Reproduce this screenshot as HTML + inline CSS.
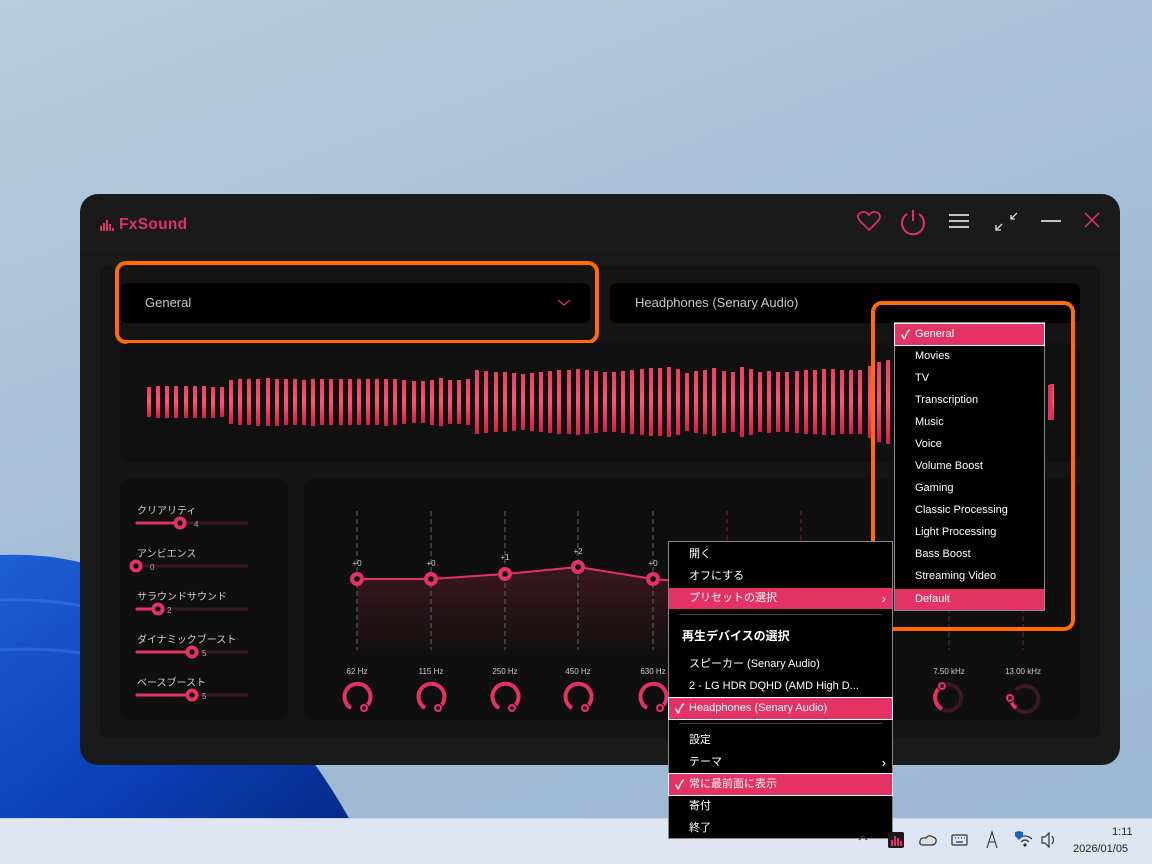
<!DOCTYPE html>
<html><head><meta charset="utf-8">
<style>
*{margin:0;padding:0;box-sizing:border-box}
body{width:1152px;height:864px;overflow:hidden;position:relative;font-family:"Liberation Sans","Noto Sans CJK JP",sans-serif;background:linear-gradient(160deg,#b7cde0 0%,#a3bdd6 50%,#9cb7d2 100%)}
.abs{position:absolute}
.win{left:80px;top:194px;width:1040px;height:571px;background:#1a1a1a;border-radius:18px}
.inner{left:100px;top:266px;width:1000px;height:472px;background:#141414;border-radius:8px}
.dd{height:40px;top:283px;background:#000;border-radius:7px;color:#c8c8c8;font-size:13px;line-height:40px;padding-left:25px}
.orange{border:4px solid #ff6d00;border-radius:11px}
.panel{background:#0f0f0f;border-radius:10px}
.menu{background:#000;border:1px solid #8a8a8a;color:#fff;font-size:11px}
.mi{position:absolute;left:0;right:0;height:21px;line-height:21px;padding-left:20px}
.hl{background:#e33263}
.hlb{background:#e33263;outline:1px solid #fff}
.ck{position:absolute;left:6px;font-size:13px;font-weight:bold}
.lbl{position:absolute;color:#cfcfcf;font-size:10px}
.sep{position:absolute;left:10px;right:10px;height:1px;background:#444}
#wave{position:absolute;left:0;top:0}
</style></head><body>
<svg class="abs" style="left:0;top:500px" width="420" height="320" viewBox="0 0 420 320">
<defs><linearGradient id="sw" x1="0" y1="0" x2="1" y2="1"><stop offset="0" stop-color="#1d5fd6"/><stop offset="0.6" stop-color="#0b3fb5"/><stop offset="1" stop-color="#062a8a"/></linearGradient></defs>
<path d="M0 55 Q120 50 200 130 Q300 230 350 320 L0 320 Z" fill="url(#sw)"/>
<path d="M0 100 Q150 95 260 200" stroke="#3b78e0" stroke-width="3" fill="none" opacity=".6"/>
<path d="M0 150 Q150 140 270 240" stroke="#3b78e0" stroke-width="3" fill="none" opacity=".5"/>
</svg>
<div class="abs" style="left:0;top:818px;width:1152px;height:46px;background:#dfe6f2;border-top:1px solid #c9d3e3"></div>

<div class="abs win"></div>
<svg class="abs" style="left:100px;top:220px" width="16" height="12"><rect x="0" y="6" width="2" height="5" fill="#e33263"/><rect x="3" y="3" width="2" height="8" fill="#e33263"/><rect x="6" y="0" width="2" height="11" fill="#e33263"/><rect x="9" y="4" width="2" height="7" fill="#e33263"/><rect x="12" y="8" width="2" height="3" fill="#e33263"/></svg>
<div class="abs" style="left:119px;top:216px;color:#e33263;font-size:15.5px;font-weight:bold;letter-spacing:.3px">FxSound</div>
<svg class="abs" style="left:855px;top:208px" width="260" height="28" fill="none" stroke-width="1.6">
<path d="M14 22 L5 13 Q1 8 5 5 Q10 2 14 7 Q18 2 23 5 Q27 8 23 13 Z" stroke="#e33263"/>
<path d="M58 2 L58 13" stroke="#e33263" stroke-width="2"/><path d="M52 6 A11 11 0 1 0 64 6" stroke="#e33263" stroke-width="2"/>
<path d="M94 7 H114 M94 13 H114 M94 19 H114" stroke="#ddd" stroke-width="1.8"/>
<path d="M141 22 L147 16 M141 17 V22 H146 M162 5 L156 11 M156 7 V11 H160" stroke="#ddd" stroke-width="1.3"/>
<path d="M186 13 H206" stroke="#ddd" stroke-width="1.8"/>
<path d="M230 5 L244 19 M244 5 L230 19" stroke="#e33263" stroke-width="1.5"/>
</svg>
<div class="abs" style="left:80px;top:249px;width:1040px;height:1px;background:#202020"></div>
<div class="abs inner"></div>
<div class="abs dd" style="left:120px;width:470px">General</div>
<svg class="abs" style="left:557px;top:298px" width="14" height="10"><path d="M1 2 L7 7 L13 2" stroke="#e33263" fill="none" stroke-width="1.3"/></svg>
<div class="abs orange" style="left:115px;top:261px;width:484px;height:83px"></div>
<div class="abs dd" style="left:610px;width:470px">Headphones (Senary Audio)</div>

<div class="abs panel" style="left:120px;top:343px;width:960px;height:119px;background:#101010"></div>
<div id="wave"></div>

<div class="abs panel" style="left:120px;top:479px;width:168px;height:241px"></div>
<div class="abs panel" style="left:304px;top:479px;width:776px;height:241px"></div>
<div class="lbl" style="left:137px;top:502px">クリアリティ</div>
<div class="lbl" style="left:137px;top:545px">アンビエンス</div>
<div class="lbl" style="left:137px;top:588px">サラウンドサウンド</div>
<div class="lbl" style="left:137px;top:631px">ダイナミックブースト</div>
<div class="lbl" style="left:137px;top:674px">ベースブースト</div>
<svg class="abs" style="left:120px;top:479px" width="168" height="241">
<g stroke-linecap="round">
<g transform="translate(0,44)"><line x1="17" y1="0" x2="127" y2="0" stroke="#3a1a20" stroke-width="3"/><line x1="17" y1="0" x2="60" y2="0" stroke="#e33263" stroke-width="3"/><circle cx="60" cy="0" r="6.5" fill="#e33263"/><circle cx="60" cy="0" r="2.6" fill="#000"/><text x="74" y="4" fill="#aaa" font-size="8" font-family="Liberation Sans">4</text></g>
<g transform="translate(0,87)"><line x1="17" y1="0" x2="127" y2="0" stroke="#3a1a20" stroke-width="3"/><circle cx="16" cy="0" r="6.5" fill="#e33263"/><circle cx="16" cy="0" r="2.6" fill="#000"/><text x="30" y="4" fill="#aaa" font-size="8" font-family="Liberation Sans">0</text></g>
<g transform="translate(0,130)"><line x1="17" y1="0" x2="127" y2="0" stroke="#3a1a20" stroke-width="3"/><line x1="17" y1="0" x2="38" y2="0" stroke="#e33263" stroke-width="3"/><circle cx="38" cy="0" r="6.5" fill="#e33263"/><circle cx="38" cy="0" r="2.6" fill="#000"/><text x="47" y="4" fill="#aaa" font-size="8" font-family="Liberation Sans">2</text></g>
<g transform="translate(0,173)"><line x1="17" y1="0" x2="127" y2="0" stroke="#3a1a20" stroke-width="3"/><line x1="17" y1="0" x2="72" y2="0" stroke="#e33263" stroke-width="3"/><circle cx="72" cy="0" r="6.5" fill="#e33263"/><circle cx="72" cy="0" r="2.6" fill="#000"/><text x="82" y="4" fill="#aaa" font-size="8" font-family="Liberation Sans">5</text></g>
<g transform="translate(0,216)"><line x1="17" y1="0" x2="127" y2="0" stroke="#3a1a20" stroke-width="3"/><line x1="17" y1="0" x2="72" y2="0" stroke="#e33263" stroke-width="3"/><circle cx="72" cy="0" r="6.5" fill="#e33263"/><circle cx="72" cy="0" r="2.6" fill="#000"/><text x="82" y="4" fill="#aaa" font-size="8" font-family="Liberation Sans">5</text></g>
</g></svg>

<svg class="abs" style="left:0;top:0" width="1152" height="864" font-family="Liberation Sans">
<defs><linearGradient id="fill" x1="0" y1="0" x2="0" y2="1"><stop offset="0" stop-color="#3a1820"/><stop offset="1" stop-color="#141010"/></linearGradient></defs>
<polygon points="357,579 431,579 505,574 578,567 653,579 727,579 727,650 357,650" fill="url(#fill)"/>
<g stroke-dasharray="5,3" stroke-width="1.5">
<line x1="357" y1="511" x2="357" y2="650" stroke="#4a4a4a"/><line x1="431" y1="511" x2="431" y2="650" stroke="#4a4a4a"/><line x1="505" y1="511" x2="505" y2="650" stroke="#4a4a4a"/><line x1="578" y1="511" x2="578" y2="650" stroke="#4a4a4a"/><line x1="653" y1="511" x2="653" y2="650" stroke="#4a4a4a"/>
<line x1="727" y1="511" x2="727" y2="650" stroke="#4a2028"/><line x1="801" y1="511" x2="801" y2="650" stroke="#4a2028"/><line x1="949" y1="600" x2="949" y2="650" stroke="#4a2028"/><line x1="1023" y1="600" x2="1023" y2="650" stroke="#4a2028"/>
</g>
<polyline points="357,579 431,579 505,574 578,567 653,579 690,582" fill="none" stroke="#e33263" stroke-width="2"/>
<g fill="#e33263"><circle cx="357" cy="579" r="7"/><circle cx="431" cy="579" r="7"/><circle cx="505" cy="574" r="7"/><circle cx="578" cy="567" r="7"/><circle cx="653" cy="579" r="7"/></g>
<g fill="#000"><circle cx="357" cy="579" r="2.8"/><circle cx="431" cy="579" r="2.8"/><circle cx="505" cy="574" r="2.8"/><circle cx="578" cy="567" r="2.8"/><circle cx="653" cy="579" r="2.8"/></g>
<g fill="#ccc" font-size="8" text-anchor="middle"><text x="357" y="566">+0</text><text x="431" y="566">+0</text><text x="505" y="560">+1</text><text x="578" y="554">+2</text><text x="653" y="566">+0</text>
<text x="357" y="674">62 Hz</text><text x="431" y="674">115 Hz</text><text x="505" y="674">250 Hz</text><text x="578" y="674">450 Hz</text><text x="653" y="674">630 Hz</text><text x="949" y="674">7.50 kHz</text><text x="1023" y="674">13.00 kHz</text></g>
<g fill="none" stroke-width="4">
<g stroke="#e33263"><path d="M364 708 A13 13 0 1 0 351 708"/><path d="M438 708 A13 13 0 1 0 425 708"/><path d="M512 708 A13 13 0 1 0 499 708"/><path d="M585 708 A13 13 0 1 0 572 708"/><path d="M660 708 A13 13 0 1 0 647 708"/></g>
<path d="M942 686 A13 13 0 1 1 942 709" stroke="#3a1a20"/><path d="M942 686 A13 13 0 0 0 942 709" stroke="#e33263"/>
<path d="M1016 690 A13 13 0 1 1 1016 708" stroke="#3a1a20"/><path d="M1016 708 A13 13 0 0 1 1011 697" stroke="#e33263"/>
</g>
<g fill="#e33263" stroke="#141414" stroke-width="1"><circle cx="364" cy="708" r="4.5"/><circle cx="438" cy="708" r="4.5"/><circle cx="512" cy="708" r="4.5"/><circle cx="585" cy="708" r="4.5"/><circle cx="660" cy="708" r="4.5"/><circle cx="942" cy="686" r="4.5"/><circle cx="1010" cy="698" r="4.5"/></g>
<g fill="#000"><circle cx="364" cy="708" r="1.8"/><circle cx="438" cy="708" r="1.8"/><circle cx="512" cy="708" r="1.8"/><circle cx="585" cy="708" r="1.8"/><circle cx="660" cy="708" r="1.8"/><circle cx="942" cy="686" r="1.8"/><circle cx="1010" cy="698" r="1.8"/></g>
</svg>

<div class="abs orange" style="left:871px;top:301px;width:204px;height:330px"></div>
<div class="abs menu" style="left:894px;top:322px;width:151px;height:289px;font-size:11px">
<div class="mi hlb" style="top:1px"><span class="ck">✓</span>General</div>
<div class="mi" style="top:23px">Movies</div>
<div class="mi" style="top:45px">TV</div>
<div class="mi" style="top:67px">Transcription</div>
<div class="mi" style="top:89px">Music</div>
<div class="mi" style="top:111px">Voice</div>
<div class="mi" style="top:133px">Volume Boost</div>
<div class="mi" style="top:155px">Gaming</div>
<div class="mi" style="top:177px">Classic Processing</div>
<div class="mi" style="top:199px">Light Processing</div>
<div class="mi" style="top:221px">Bass Boost</div>
<div class="mi" style="top:243px">Streaming Video</div>
<div class="mi hl" style="top:266px">Default</div>
</div>

<div class="abs menu" style="left:668px;top:541px;width:225px;height:298px">
<div class="mi" style="top:2px">開く</div>
<div class="mi" style="top:24px">オフにする</div>
<div class="mi hl" style="top:46px">プリセットの選択<span style="position:absolute;right:6px;font-size:13px">›</span></div>
<div class="sep" style="top:72px"></div>
<div class="mi" style="top:84px;padding-left:13px;font-size:12px;font-weight:bold">再生デバイスの選択</div>
<div class="mi" style="top:112px">スピーカー (Senary Audio)</div>
<div class="mi" style="top:134px">2 - LG HDR DQHD (AMD High D...</div>
<div class="mi hlb" style="top:156px"><span class="ck">✓</span>Headphones (Senary Audio)</div>
<div class="sep" style="top:181px"></div>
<div class="mi" style="top:188px">設定</div>
<div class="mi" style="top:210px">テーマ<span style="position:absolute;right:6px;font-size:13px">›</span></div>
<div class="mi hlb" style="top:232px"><span class="ck">✓</span>常に最前面に表示</div>
<div class="mi" style="top:254px">寄付</div>
<div class="mi" style="top:276px">終了</div>
</div>

<svg class="abs" style="left:855px;top:826px" width="200" height="30" fill="none" stroke="#333" stroke-width="1.2">
<path d="M4 14 L8 10 L12 14"/>
<rect x="33" y="6" width="16" height="16" rx="2" fill="#1a1a1a" stroke="none"/><g fill="#e33263" stroke="none"><rect x="36" y="14" width="2" height="6"/><rect x="39" y="10" width="2" height="10"/><rect x="42" y="12" width="2" height="8"/><rect x="45" y="15" width="2" height="5"/></g>
<path d="M68 19 Q64 19 65 15 Q66 11 71 12 Q74 8 78 11 Q82 12 81 16 Q80 19 76 19 Z" fill="#ddd"/>
<rect x="97" y="9" width="15" height="10" rx="1"/><path d="M100 12h1M103 12h1M106 12h1M109 12h1M101 16h7"/>
<path d="M132 22 L137 6 L142 22 M134 16 H140" stroke-width="1.1"/>
<path d="M163 13 Q170 7 177 13 M166 16 Q170 12 174 16"/><circle cx="170" cy="19" r="1" fill="#333"/><path d="M160 6 L164 5 L168 6 V10 Q164 14 164 14 Q160 10 160 10 Z" fill="#1565c0" stroke="none"/>
<path d="M187 11 H190 L194 7 V21 L190 17 H187 Z M197 10 Q200 14 197 18"/>
</svg>
<div class="abs" style="left:1112px;top:826px;font-size:11px;color:#222">1:11</div>
<div class="abs" style="left:1073px;top:843px;font-size:11px;color:#222">2026/01/05</div>

<script>
var h=[30,32,32,32,32,32,32,31,30,44,46,46,47,48,47,46,46,45,47,46,46,46,46,46,46,46,47,46,44,42,42,45,48,44,44,46,64,62,60,60,58,56,58,60,62,64,64,66,64,62,60,60,62,64,66,68,68,70,66,58,62,64,68,62,60,70,66,60,62,60,60,62,64,64,66,66,64,64,64,72,80,84,86,84,88,86,88,70,66,64,60,62,60,58,58,56,56,54,50,36];
var s='';
for(var i=0;i<h.length;i++){var x=147+i*9.12;if(x>1052)break;s+='<div class="abs" style="left:'+x.toFixed(1)+'px;top:'+(402-h[i]/2)+'px;width:4px;height:'+h[i]+'px;background:linear-gradient(#e8405f,#ff5470 50%,#d42045)"></div>';}
s+='<div class="abs" style="left:1048px;top:385px;width:4px;height:35px;background:#e33263"></div>';
document.getElementById('wave').innerHTML=s;
</script>
</body></html>
